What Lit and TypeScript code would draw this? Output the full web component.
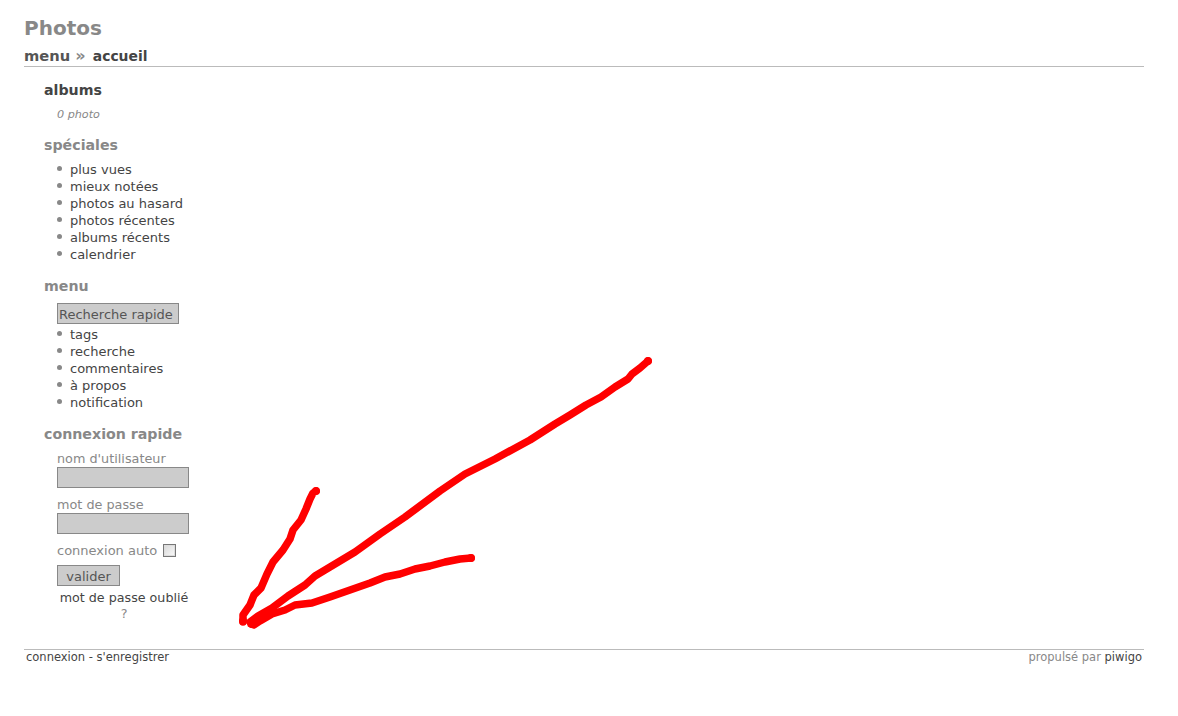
import { LitElement, html, css, svg } from "lit";
import { customElement } from "lit/decorators.js";

const strokes = [
  "M316 491L313 493L310 499L306 509L301 520L293 530L290 539L283 550L273 562L267 574L261 588L254 595L250 605L243 615L243 622",
  "M648 361L640 368L632 374L628 379L615 387L601 397L586 405L570 415L555 424L530 440L495 459L465 474L440 491L405 517L380 534L355 552L330 567L315 576L305 585L288 596L272 608L258 616L250 622",
  "M471 558L460 559L445 562L430 566L415 569L400 574L385 577L370 583L350 590L330 597L312 603L295 605L285 610L272 614L260 621L254 625L251 624",
];
const ends = [
  [316, 491],
  [648, 361],
  [471, 558],
  [243, 621],
  [252, 624],
];

@customElement("app-root")
export class AppRoot extends LitElement {
  static styles = css`
    :host {
      display: block;
      position: relative;
      height: 716px;
      font-family: "DejaVu Sans", Verdana, sans-serif;
      font-size: 13px;
      color: #444;
      background: #fff;
      overflow: hidden;
    }
    .page { padding: 17px 34px 0 24px; }
    h1 { margin: 0; font-size: 20px; line-height: 23px; font-weight: bold; color: #888; }
    .crumb {
      margin-top: 7px;
      padding-bottom: 1px;
      border-bottom: 1px solid #bbb;
      font-size: 14.7px;
      line-height: 18px;
      font-weight: bold;
      color: #444;
    }
    .crumb .sep { color: #888; font-size: 16px; margin-right: 2px; }
    .crumb .first { color: #555; }
    .crumb .last { font-size: 13.9px; }
    .menu { padding: 14px 0 0 20px; width: 170px; height: 582px; box-sizing: border-box; }
    h3 { margin: 0; font-size: 14.2px; line-height: 18px; font-weight: bold; color: #888; }
    h3.dark { color: #444; }
    .count { margin: 9px 0 0 13px; font-size: 11.2px; line-height: 14px; font-style: italic; color: #888; }
    ul { margin: 0; padding: 0 0 0 26px; list-style: none; }
    li { position: relative; line-height: 17px; height: 17px; }
    li::before {
      content: "";
      position: absolute;
      left: -13px;
      top: 5px;
      width: 5px;
      height: 5px;
      border-radius: 50%;
      background: #888;
    }
    .sp { margin-top: 14px; }
    .list1 { margin-top: 7px; }
    .mn { margin-top: 14px; }
    .search {
      display: block;
      box-sizing: border-box;
      margin: 8px 0 2px 13px;
      width: 122px;
      height: 21px;
      border: 1px solid #888;
      background: #ccc;
      padding: 0 1px;
      line-height: 21px;
      color: #555;
      white-space: nowrap;
    }
    .cx { margin-top: 14px; }
    form { margin: 8px 0 0 13px; display: block; }
    .lbl { line-height: 16px; color: #888; font-size: 12.8px; }
    .field {
      box-sizing: border-box;
      width: 132px;
      height: 21px;
      margin: 0 0 9px;
      border: 1px solid #888;
      background: #ccc;
    }
    .auto { display: flex; align-items: center; gap: 6px; height: 21px; color: #888; margin-top: -3px; }
    .cb {
      box-sizing: border-box;
      width: 13px;
      height: 13px;
      border: 1px solid #777;
      background: linear-gradient(135deg, #d8d8d8, #fafafa);
      box-shadow: inset 0 0 0 1px #ddd;
    }
    .btn {
      box-sizing: border-box;
      margin-top: 4px;
      width: 63px;
      height: 21px;
      border: 1px solid #888;
      background: #ccc;
      color: #555;
      text-align: center;
      line-height: 21px;
    }
    .forgot { width: 134px; margin-top: 4px; text-align: center; line-height: 16px; color: #444; font-size: 12.7px; }
    .forgot .q { display: block; color: #888; }
    .footer {
      display: flex;
      justify-content: space-between;
      border-top: 1px solid #bbb;
      padding: 0 2px;
      font-size: 11.5px;
      line-height: 14px;
      color: #444;
    }
    .footer .muted { color: #888; }
    .ink { position: absolute; left: 0; top: 0; pointer-events: none; }
    .ink path { fill: none; stroke: #f00; stroke-width: 7.5; stroke-linecap: round; stroke-linejoin: round; }
    .ink circle { fill: #f00; }
  `;

  render() {
    return html`
      <div class="page">
        <h1>Photos</h1>
        <div class="crumb"><span class="first">menu</span> <span class="sep">»</span> <span class="last">accueil</span></div>
        <div class="menu">
          <h3 class="dark">albums</h3>
          <div class="count">0 photo</div>
          <h3 class="sp">spéciales</h3>
          <ul class="list1">
            <li>plus vues</li><li>mieux notées</li><li>photos au hasard</li>
            <li>photos récentes</li><li>albums récents</li><li>calendrier</li>
          </ul>
          <h3 class="mn">menu</h3>
          <div class="search">Recherche rapide</div>
          <ul>
            <li>tags</li><li>recherche</li><li>commentaires</li><li>à propos</li><li>notification</li>
          </ul>
          <h3 class="cx">connexion rapide</h3>
          <form>
            <div class="lbl">nom d'utilisateur</div>
            <div class="field"></div>
            <div class="lbl">mot de passe</div>
            <div class="field"></div>
            <div class="auto">connexion auto <span class="cb"></span></div>
            <div class="btn">valider</div>
            <div class="forgot">mot de passe oublié <span class="q">?</span></div>
          </form>
        </div>
        <div class="footer">
          <span>connexion - s'enregistrer</span>
          <span><span class="muted">propulsé par</span> piwigo</span>
        </div>
      </div>
      <svg class="ink" width="1178" height="716" viewBox="0 0 1178 716">
        ${strokes.map((d) => svg`<path d=${d}></path>`)}
        ${ends.map(([x, y]) => svg`<circle cx=${x} cy=${y} r="4"></circle>`)}
      </svg>
    `;
  }
}
